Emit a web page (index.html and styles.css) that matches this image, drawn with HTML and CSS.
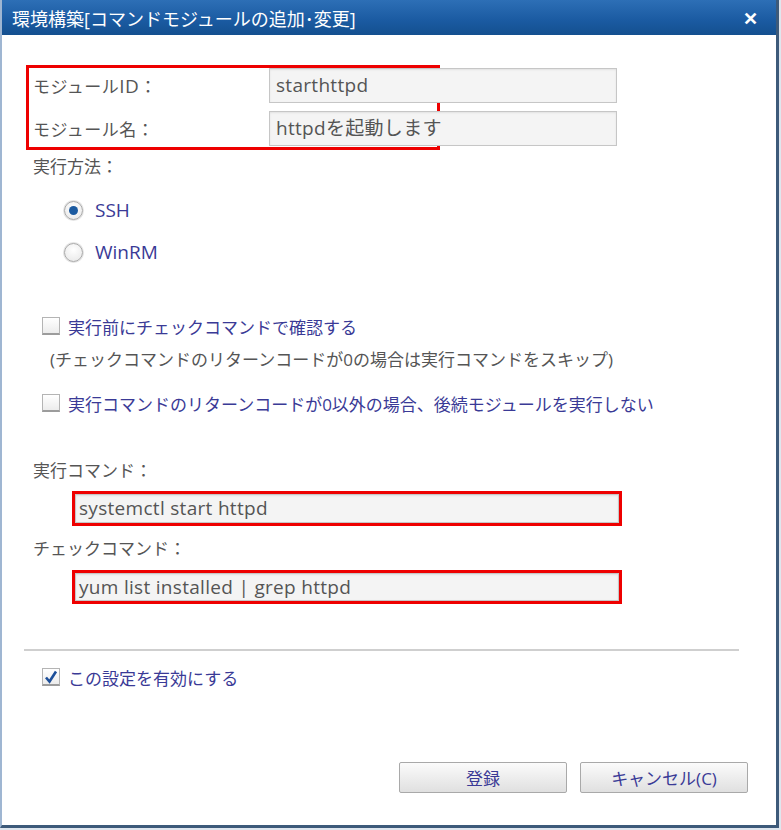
FILE: index.html
```html
<!DOCTYPE html>
<html lang="ja">
<head>
    <meta charset="UTF-8">
    <title>環境構築[コマンドモジュールの追加･変更]</title>
    <link rel="stylesheet" href="styles.css">
</head>
<body>

<div class="window">
    <div class="titlebar">
        <span class="title">環境構築[コマンドモジュールの追加･変更]</span>
        <span class="close">&#x2715;</span>
    </div>

    <div class="content">
        <!-- Module fields (highlighted) -->
        <div class="mark mark-module">
            <div class="field-row">
                <label class="label field-label">モジュール<span class="latin">ID</span>：</label>
                <div class="input input-wide">starthttpd</div>
            </div>
            <div class="field-row">
                <label class="label field-label">モジュール名：</label>
                <div class="input input-wide">httpdを起動します</div>
            </div>
        </div>

        <div class="label line section-method">実行方法：</div>
        <div class="radios">
            <div class="option">
                <span class="radio checked"></span>
                <span class="option-text latin">SSH</span>
            </div>
            <div class="option">
                <span class="radio"></span>
                <span class="option-text latin">WinRM</span>
            </div>
        </div>

        <div class="check-row check-first">
            <span class="checkbox"></span>
            <span class="option-text">実行前にチェックコマンドで確認する</span>
        </div>
        <div class="label note">(チェックコマンドのリターンコードが0の場合は実行コマンドをスキップ)</div>
        <div class="check-row">
            <span class="checkbox"></span>
            <span class="option-text">実行コマンドのリターンコードが0以外の場合、後続モジュールを実行しない</span>
        </div>

        <div class="label line section-exec">実行コマンド：</div>
        <div class="mark mark-cmd">
            <div class="input input-cmd">systemctl start httpd</div>
        </div>

        <div class="label line section-check">チェックコマンド：</div>
        <div class="mark mark-cmd mark-check">
            <div class="input input-cmd">yum list installed | grep httpd</div>
        </div>

        <hr class="divider">

        <div class="check-row check-enable">
            <span class="checkbox checked">
                <svg width="14" height="14" viewBox="0 0 14 14">
                    <path d="M2 7.5 L5.5 11.5 L12 1.5" fill="none" stroke="#1d4f9a" stroke-width="2.6"/>
                </svg>
            </span>
            <span class="option-text">この設定を有効にする</span>
        </div>

        <div class="buttons">
            <button class="button">登録</button>
            <button class="button">キャンセル(C)</button>
        </div>
    </div>
</div>

</body>
</html>
```

FILE: styles.css
```css
/* Global */
body {
    margin: 0;
    background-color: #dfe6ee;
    font-family: "Open Sans", "Noto Sans CJK JP", sans-serif;
    font-size: 17px;
}

.latin {
    font-size: 19px;
}

.window {
    box-sizing: border-box;
    width: 779px;
    height: 828px;
    background: #ffffff;
    border-left: 2px solid #9fb6d2;
    border-right: 3px solid #3d5a7a;
    border-bottom: 3px solid #3d5a7a;
}

/* Title bar */
.titlebar {
    height: 35px;
    display: flex;
    align-items: center;
    justify-content: space-between;
    padding: 0 18px 0 10px;
    background: linear-gradient(#2d6fb6, #1a5aa1 60%, #14508f);
    color: #ffffff;
}

.title {
    font-size: 18px;
}

.close {
    font-size: 18px;
    font-weight: bold;
}

/* Content */
.content {
    padding: 30px 0 0 24px;
}

.label {
    color: #555555;
}

.line {
    height: 34px;
    line-height: 34px;
    padding-left: 7px;
}

/* Red highlight boxes */
.mark {
    border: 3px solid #ee0000;
    box-sizing: border-box;
}

.mark-module {
    width: 414px;
    height: 85px;
    display: flex;
    flex-direction: column;
    gap: 8px;
}

.field-row {
    display: flex;
    align-items: center;
    height: 35px;
}

.field-label {
    width: 236px;
    flex-shrink: 0;
    padding-left: 4px;
    letter-spacing: 0.5px;
}

.input {
    box-sizing: border-box;
    height: 35px;
    line-height: 33px;
    padding-left: 6px;
    background: #f4f4f4;
    border: 1px solid #c6c6c6;
    box-shadow: inset 0 1px 2px rgba(0, 0, 0, 0.08);
    color: #555555;
    font-size: 19px;
    letter-spacing: 0.3px;
    white-space: nowrap;
}

.input-wide {
    width: 348px;
    flex-shrink: 0;
}

.mark-cmd {
    width: 550px;
    height: 35px;
    margin: 3px 0 0 46px;
}

.mark-check {
    height: 34px;
    margin-top: 4px;
}

.input-cmd {
    height: 100%;
    line-height: 27px;
    padding-left: 3px;
}

.section-exec {
    margin-top: 34px;
}

.section-check {
    margin-top: 6px;
}

/* Radio buttons */
.radios {
    margin-top: 5px;
    padding-left: 38px;
}

.option {
    display: flex;
    align-items: center;
    height: 42px;
}

.radio {
    width: 17px;
    height: 17px;
    border-radius: 50%;
    border: 1px solid #a8a8a8;
    background: radial-gradient(circle at 50% 35%, #ffffff, #e6e6e6);
    box-shadow: 0 0 0 1px #e4e4e4;
    position: relative;
    margin-right: 12px;
}

.radio.checked::after {
    content: '';
    position: absolute;
    left: 4px;
    top: 4px;
    width: 9px;
    height: 9px;
    border-radius: 50%;
    background: #1b5aa0;
}

.option-text {
    color: #3a3a96;
}

/* Checkboxes */
.check-row {
    display: flex;
    align-items: center;
    height: 34px;
    padding-left: 16px;
}

.check-first {
    margin-top: 36px;
}

.checkbox {
    box-sizing: border-box;
    width: 18px;
    height: 18px;
    border: 1px solid #b4b4b4;
    border-bottom: 2px solid #9c9c9c;
    background: linear-gradient(#ffffff, #ececec);
    margin-right: 8px;
    display: flex;
    align-items: center;
    justify-content: center;
}

.note {
    height: 34px;
    line-height: 34px;
    padding-left: 24px;
    margin-bottom: 9px;
}

/* Divider */
.divider {
    width: 715px;
    margin: 45px 0 0 -2px;
    border: none;
    border-top: 2px solid #cfcfcf;
}

.check-enable {
    margin-top: 9px;
}

/* Buttons */
.buttons {
    display: flex;
    gap: 13px;
    margin: 68px 0 0 373px;
}

.button {
    width: 168px;
    height: 31px;
    font-family: inherit;
    font-size: 17px;
    color: #3a3a96;
    background: linear-gradient(#fbfbfb, #ececec 55%, #e0e0e0);
    border: 1px solid #a9a9a9;
    border-radius: 2px;
    padding: 0;
}
```
